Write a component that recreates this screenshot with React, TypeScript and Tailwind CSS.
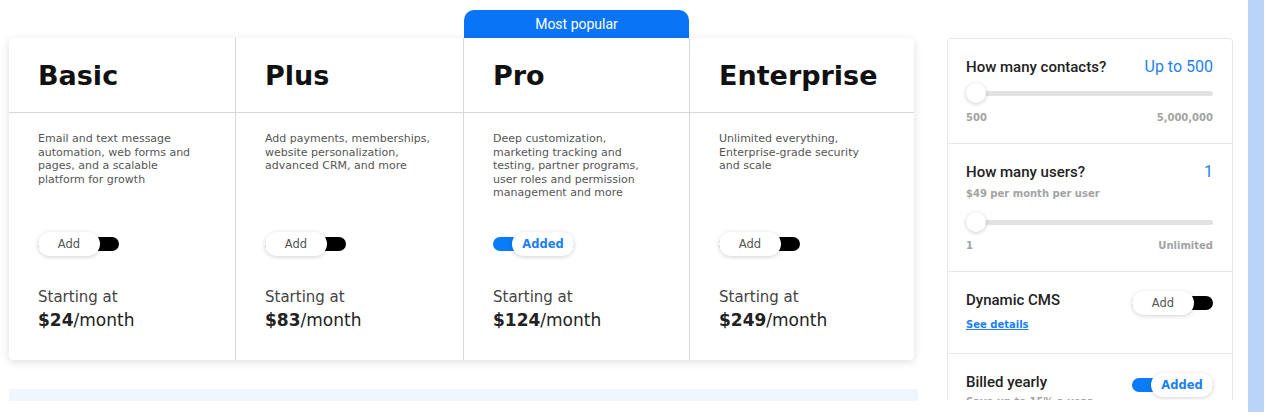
import React from 'react';

const workSans = { fontFamily: '"DejaVu Sans", "Liberation Sans", sans-serif' };
const roboto = { fontFamily: 'Roboto, "Liberation Sans", sans-serif' };

interface Plan {
  name: string;
  desc: string[];
  price: string;
  added?: boolean;
}

const plans: Plan[] = [
  {
    name: 'Basic',
    desc: ['Email and text message', 'automation, web forms and', 'pages, and a scalable', 'platform for growth'],
    price: '$24',
  },
  {
    name: 'Plus',
    desc: ['Add payments, memberships,', 'website personalization,', 'advanced CRM, and more'],
    price: '$83',
  },
  {
    name: 'Pro',
    desc: ['Deep customization,', 'marketing tracking and', 'testing, partner programs,', 'user roles and permission', 'management and more'],
    price: '$124',
    added: true,
  },
  {
    name: 'Enterprise',
    desc: ['Unlimited everything,', 'Enterprise-grade security', 'and scale'],
    price: '$249',
  },
];

// pill switch: white knob with label sliding over a thin track
const AddToggle: React.FC<{ on?: boolean }> = ({ on }) => (
  <div className="relative w-[81px] h-[24px] shrink-0" style={workSans}>
    <div className={`absolute left-0 right-0 top-[5px] h-[14px] rounded-full ${on ? 'bg-[#0a7cf8]' : 'bg-black'}`} />
    <div
      className={`absolute top-0 w-[62px] h-[24px] rounded-full bg-white shadow-[0_1px_4px_rgba(0,0,0,0.18)] flex items-center justify-center text-[11.5px] pt-[1px] ${
        on ? 'right-0 text-[#1a7ff5] font-bold' : 'left-0 text-[#555]'
      }`}
    >
      {on ? 'Added' : 'Add'}
    </div>
  </div>
);

const Slider: React.FC = () => (
  <div className="relative h-[20px]">
    <div className="absolute left-0 right-0 top-[8px] h-[5px] rounded-full bg-[#e2e2e2]" />
    <div className="absolute left-0 top-0 w-[20px] h-[20px] rounded-full bg-white shadow-[0_1px_4px_rgba(0,0,0,0.2)]" />
  </div>
);

const App: React.FC = () => {
  return (
    <div className="w-[1270px] h-[420px] bg-white flex overflow-hidden">
      <div className="h-[401px] overflow-hidden flex pl-[9px]">

        {/* ── Plans ── */}
        <div className="w-[909px] flex flex-col">
          <div className="grid grid-cols-[226px_228px_226px_225px] h-[28px] mt-[10px]">
            <div
              className="col-start-3 ml-[1px] rounded-t-[10px] bg-[#0a74f6] text-white text-[14px] font-normal flex items-center justify-center pt-[1px]"
              style={roboto}
            >
              Most popular
            </div>
          </div>

          <div
            className="w-[905px] h-[322px] grid grid-cols-[226px_228px_226px_225px] bg-white rounded-[4px] shadow-[0_2px_8px_rgba(0,0,0,0.13)]"
            style={workSans}
          >
            {plans.map((p, i) => (
              <div key={p.name} className={`flex flex-col ${i > 0 ? 'border-l border-[#d8d8d8]' : ''}`}>
                <div className="h-[75px] border-b border-[#d8d8d8] flex items-center pl-[29px]">
                  <span className="text-[27px] font-bold text-[#111] leading-none">{p.name}</span>
                </div>
                <div className="h-[119px] pt-[19px] pl-[29px]">
                  <p className="text-[11px] leading-[13.5px] text-[#555] whitespace-nowrap">
                    {p.desc.map((line, j) => (
                      <React.Fragment key={j}>
                        {j > 0 && <br />}
                        {line}
                      </React.Fragment>
                    ))}
                  </p>
                </div>
                <div className="pl-[29px]">
                  <AddToggle on={p.added} />
                  <p className="mt-[32px] text-[15px] leading-[18px] text-[#444]">Starting at</p>
                  <p className="mt-[3px] text-[17px] leading-[22px] text-[#222]">
                    <span className="font-bold">{p.price}</span>/month
                  </p>
                </div>
              </div>
            ))}
          </div>

          <div className="mt-[29px] h-[12px] bg-[#eff6fd]" />
        </div>

        {/* ── Sidebar ── */}
        <div className="ml-[29px] mt-[38px] w-[286px] h-[362px] overflow-hidden">
          <div className="border border-[#e6e6e6] rounded-[4px] bg-white">

            <div className="h-[105px] border-b border-[#e6e6e6] pt-[18px] pl-[18px] pr-[19px]">
              <div className="flex items-baseline justify-between" style={roboto}>
                <span className="text-[15px] leading-[20px] font-medium text-[#222]">How many contacts?</span>
                <span className="text-[16px] leading-[20px] text-[#1f7ff0]">Up to 500</span>
              </div>
              <div className="mt-[6px]">
                <Slider />
              </div>
              <div className="mt-[8px] flex justify-between text-[10px] leading-[14px] font-bold text-[#a3a3a3]" style={workSans}>
                <span>500</span>
                <span>5,000,000</span>
              </div>
            </div>

            <div className="h-[128px] border-b border-[#e6e6e6] pt-[18px] pl-[18px] pr-[19px]">
              <div className="flex items-baseline justify-between" style={roboto}>
                <span className="text-[15px] leading-[20px] font-medium text-[#222]">How many users?</span>
                <span className="text-[16px] leading-[20px] text-[#1f7ff0]">1</span>
              </div>
              <p className="mt-[5px] text-[10px] leading-[14px] font-bold text-[#a3a3a3]" style={workSans}>
                $49 per month per user
              </p>
              <div className="mt-[11px]">
                <Slider />
              </div>
              <div className="mt-[7px] flex justify-between text-[10px] leading-[14px] font-bold text-[#a3a3a3]" style={workSans}>
                <span>1</span>
                <span>Unlimited</span>
              </div>
            </div>

            <div className="h-[82px] border-b border-[#e6e6e6] pt-[18px] pl-[18px] pr-[19px] flex items-start justify-between">
              <div>
                <p className="text-[15px] leading-[20px] font-medium text-[#222]" style={roboto}>Dynamic CMS</p>
                <a href="#" className="block mt-[8px] text-[10px] leading-[14px] font-bold text-[#1a7ff5] underline" style={workSans}>
                  See details
                </a>
              </div>
              <div className="mt-[1px]">
                <AddToggle />
              </div>
            </div>

            <div className="h-[90px] pt-[18px] pl-[18px] pr-[19px] flex items-start justify-between">
              <div>
                <p className="text-[15px] leading-[20px] font-medium text-[#222]" style={roboto}>Billed yearly</p>
                <p className="mt-[3px] text-[10px] leading-[14px] font-bold text-[#a3a3a3]" style={workSans}>
                  Save up to 15% a year
                </p>
              </div>
              <div className="mt-[1px]">
                <AddToggle on />
              </div>
            </div>

          </div>
        </div>
      </div>

      {/* ── Right rail ── */}
      <div className="ml-[15px] w-[16px] h-[412px] bg-[#bad3f8] shrink-0" />
    </div>
  );
};

export default App;
